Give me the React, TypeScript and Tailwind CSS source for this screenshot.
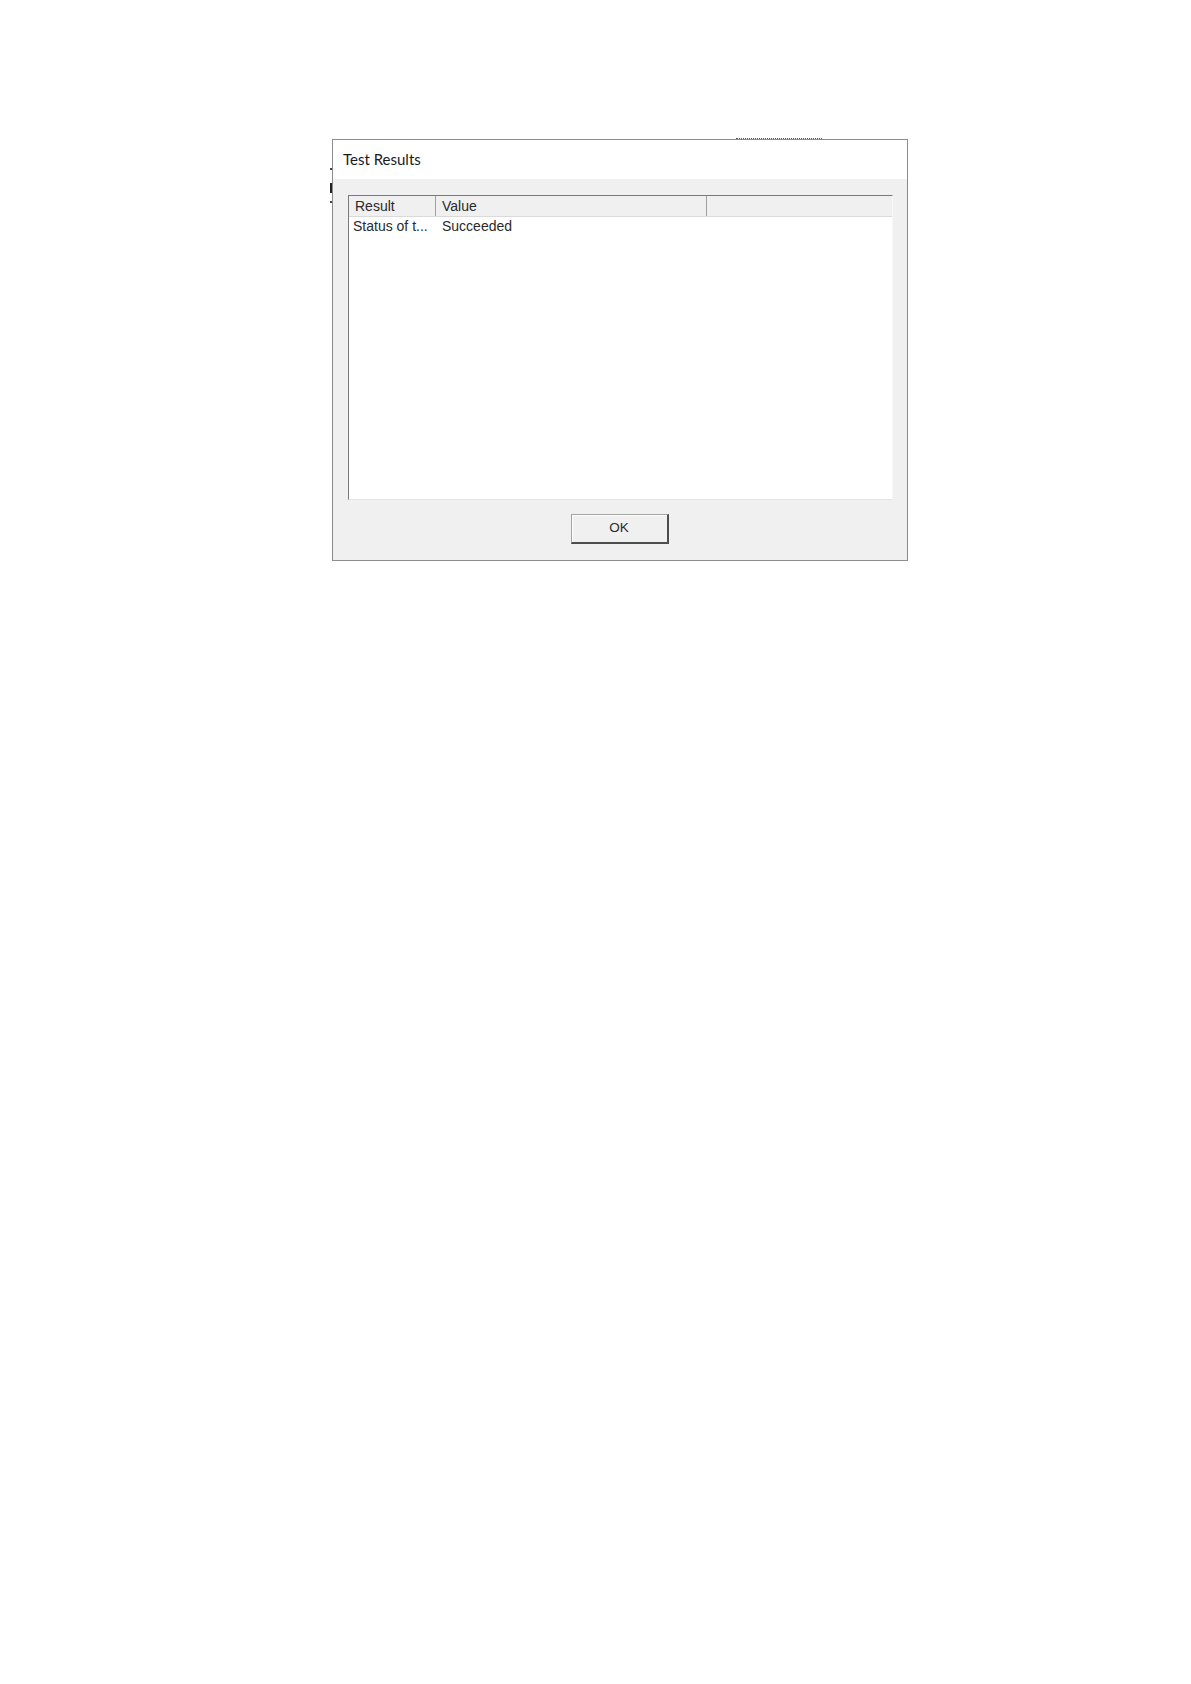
export default function App() {
  return (
    <div className="min-h-[1684px] w-[1191px] bg-white">
      <div className="pl-[332px] pt-[139px]">
        {/* Dialog */}
        <div className="relative w-[576px] h-[422px] border border-[#8c8c8c] bg-[#f0f0f0] flex flex-col">
          {/* leftover edge marks of the window behind */}
          <div className="absolute left-[-3px] top-[28px] w-[2px] h-[2px] bg-[#444]" />
          <div className="absolute left-[-3px] top-[43px] w-[2px] h-[10px] bg-[#222]" />
          <div className="absolute left-[-3px] top-[61px] w-[2px] h-[2px] bg-[#444]" />
          <div className="absolute left-[403px] top-[-2px] w-[86px] h-[2px] border-t border-dotted border-[#555]" />

          <div className="h-[39px] bg-white flex items-center pl-[10px]">
            <span className="text-[15px] text-[#1a1a1a] font-['Lato',sans-serif]">
              Test Results
            </span>
          </div>

          <div className="flex-1 flex flex-col pl-[15px] pr-[14px] pt-[16px] font-['Liberation_Sans',Arial,sans-serif] text-[14px] text-[#2a2a2a]">
            {/* List view */}
            <div className="h-[305px] bg-white border-t border-l border-[#7a7a7a] border-r border-r-[#f7f7f7] border-b border-b-[#e3e3e3] flex flex-col">
              <div className="h-[21px] flex bg-[#f0f0f0] border-b border-[#dadada]">
                <div className="w-[87px] border-r border-[#a0a0a0] pl-[6px] flex items-center">Result</div>
                <div className="w-[271px] border-r border-[#a0a0a0] pl-[6px] flex items-center">Value</div>
                <div className="flex-1" />
              </div>
              <div className="h-[19px] flex items-center">
                <div className="w-[90px] pl-[4px] whitespace-nowrap">Status of t...</div>
                <div className="pl-[3px]">Succeeded</div>
              </div>
            </div>

            {/* Buttons */}
            <div className="flex justify-center pt-[14px] pr-[2px]">
              <button className="w-[98px] h-[30px] bg-[#f0f0f0] border-t border-l border-[#a3a3a3] border-b-2 border-r-2 border-b-[#4d4d4d] border-r-[#4d4d4d] shadow-[inset_1px_1px_0_#fff] flex items-center justify-center text-[13.5px] text-[#2a2a2a]">
                OK
              </button>
            </div>
          </div>
        </div>
      </div>
    </div>
  )
}
